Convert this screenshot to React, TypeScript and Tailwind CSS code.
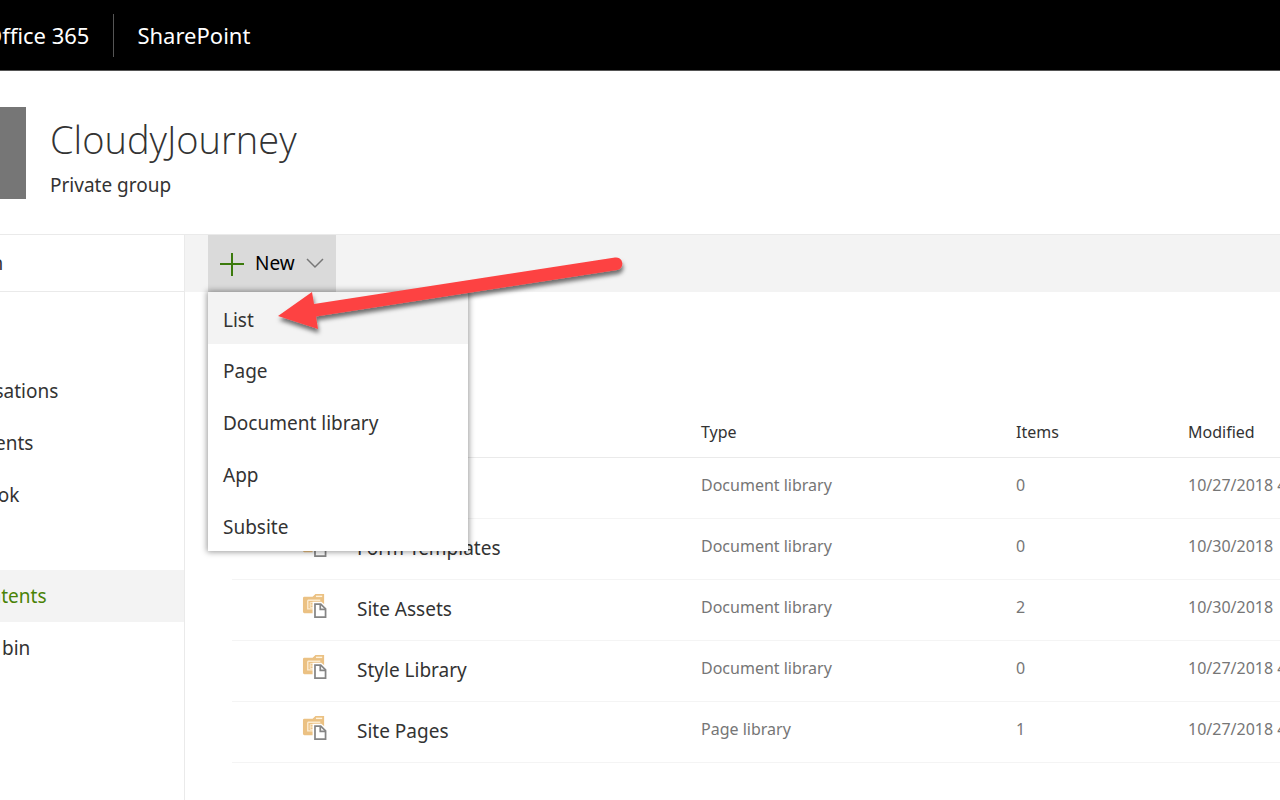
const rows = [
  { name: "Documents", type: "Document library", items: 0, modified: "10/27/2018 4" },
  { name: "Form Templates", type: "Document library", items: 0, modified: "10/30/2018" },
  { name: "Site Assets", type: "Document library", items: 2, modified: "10/30/2018" },
  { name: "Style Library", type: "Document library", items: 0, modified: "10/27/2018 4" },
  { name: "Site Pages", type: "Page library", items: 1, modified: "10/27/2018 4" },
];

const menuItems = ["List", "Page", "Document library", "App", "Subsite"];
const teamLinks = ["Conversations", "Documents", "Notebook"];

function LibraryIcon() {
  return (
    <svg className="block" width="25" height="25" viewBox="0 0 26 26" fill="none" aria-hidden="true">
      <path d="M1 5.500Q1 4 2.500 4H11l3-3h9v20H2.500Q1 21 1 19.500Z" fill="#ebc183" />
      <path d="M14.500 3.500H21" stroke="#fff3de" strokeWidth="1.500" />
      <path d="M6 7.500h13M6 7.500v9h7" stroke="#fbebd0" strokeWidth="1.500" />
      <path d="M8.500 10h7v5h-7zM8.500 12.500h7M12 10v5" stroke="#fbebd0" />
      <path d="M11 9h9l6 5v12H11Z" fill="#fff" />
      <path d="M13.500 11.500h6l5 5v8.500h-11Z" fill="#fff" stroke="#858585" strokeWidth="1.800" />
      <path d="M19 11.500v5.500h5.500" stroke="#858585" strokeWidth="1.800" />
    </svg>
  );
}

function Arrow() {
  return (
    <svg
      className="pointer-events-none absolute top-[45px] left-[60px] z-20"
      width="370"
      height="70"
      viewBox="268 280 370 70"
      overflow="visible"
      aria-hidden="true"
    >
      <defs>
        <filter id="arrow-shadow" x="-10%" y="-30%" width="120%" height="180%">
          <feDropShadow dx="1" dy="4" stdDeviation="2" floodColor="#000" floodOpacity="0.55" />
        </filter>
      </defs>
      <path
        d="M278 316 312 292 314 304 615 257.500A6.300 6.300 0 0 1 617 270L316 316.500 318 329Z"
        fill="#fd4343"
        filter="url(#arrow-shadow)"
      />
    </svg>
  );
}

export default function App() {
  return (
    <div className="flex min-h-screen flex-col overflow-x-hidden bg-white font-['Noto_Sans','Open_Sans',sans-serif] text-[19px] text-[#333]">
      <header className="flex h-[71px] items-center border-b border-[#555] bg-black text-[22px] text-white">
        <a href="#office" className="-ml-[15px] whitespace-nowrap">Office 365</a>
        <span className="ml-6 h-[43px] w-px bg-[#555]" />
        <a href="#sharepoint" className="ml-[23px]">SharePoint</a>
      </header>

      <section className="flex h-[163px] items-start pt-9">
        <div className="h-[92px] w-[26px] bg-[#767676]" />
        <div className="ml-6 pt-2">
          <h1 className="font-['Open_Sans',sans-serif] text-[38px] leading-[48px] font-light">CloudyJourney</h1>
          <p className="mt-2 leading-7">Private group</p>
        </div>
      </section>

      <div className="flex grow border-t border-[#eaeaea]">
        <nav className="w-[185px] shrink-0 overflow-hidden border-r border-[#eaeaea]">
          <div className="flex h-[57px] items-center border-b border-[#eaeaea]">
            <a href="#search" className="-ml-[57px]">Search</a>
          </div>
          <ul className="mt-[73px]">
            {teamLinks.map((label) => (
              <li key={label} className="flex h-[52px] items-center">
                <a href="#nav" className="-ml-[69px]">{label}</a>
              </li>
            ))}
          </ul>
          <ul className="mt-[49px]">
            <li className="flex h-[52px] items-center bg-[#f3f3f3] text-[#498205]">
              <a href="#contents" className="-ml-[69px]">Site contents</a>
            </li>
            <li className="flex h-[52px] items-center">
              <a href="#bin" className="-ml-[69px]">Recycle bin</a>
            </li>
          </ul>
        </nav>

        <main className="min-w-0 grow">
          <div className="flex h-[57px] bg-[#f3f3f3] pl-[23px]">
            <div className="relative">
              <button type="button" className="flex h-[57px] w-32 items-center bg-[#dadada] pl-3 text-black">
                <svg width="24" height="24" viewBox="0 0 24 24" stroke="#3b7a0c" strokeWidth="2" aria-hidden="true">
                  <path d="M12 1v23M0 12h24" />
                </svg>
                <span className="ml-[11px]">New</span>
                <svg className="ml-[11px]" width="18" height="12" viewBox="0 0 18 12" fill="none" stroke="#777" strokeWidth="1.500" aria-hidden="true">
                  <path d="M1 1l8 8 8-8" />
                </svg>
              </button>
              <ul className="absolute top-full left-0 z-10 grid h-[259px] w-[260px] grid-rows-5 bg-white shadow-[0_0_6px_1px_rgba(0,0,0,0.4)]">
                {menuItems.map((label) => (
                  <li key={label} className="first:bg-[#f3f3f3]">
                    <button type="button" className="flex h-full w-full items-center pt-1 pl-[15px]">{label}</button>
                  </li>
                ))}
              </ul>
              <Arrow />
            </div>
          </div>

          <div className="overflow-hidden pt-[115px] pl-[47px]">
            <table className="w-full min-w-[1048px] table-fixed text-left text-base">
              <colgroup>
                <col className="w-[125px]" />
                <col className="w-[344px]" />
                <col className="w-[315px]" />
                <col className="w-[172px]" />
                <col />
              </colgroup>
              <thead>
                <tr className="h-[50px] border-b border-[#eaeaea]">
                  <th />
                  <th aria-label="Name" />
                  <th className="p-0 font-normal">Type</th>
                  <th className="p-0 font-normal">Items</th>
                  <th className="p-0 font-normal">Modified</th>
                </tr>
              </thead>
              <tbody className="text-[#767676]">
                {rows.map((row) => (
                  <tr key={row.name} className="h-[61px] border-b border-[#f4f4f4]">
                    <td className="p-0 pb-2 pl-[70px]"><LibraryIcon /></td>
                    <td className="p-0 text-[19px] text-[#333]">{row.name}</td>
                    <td className="p-0 pb-1.5">{row.type}</td>
                    <td className="p-0 pb-1.5">{row.items}</td>
                    <td className="p-0 pb-1.5 whitespace-nowrap">{row.modified}</td>
                  </tr>
                ))}
              </tbody>
            </table>
          </div>
        </main>
      </div>
    </div>
  );
}
